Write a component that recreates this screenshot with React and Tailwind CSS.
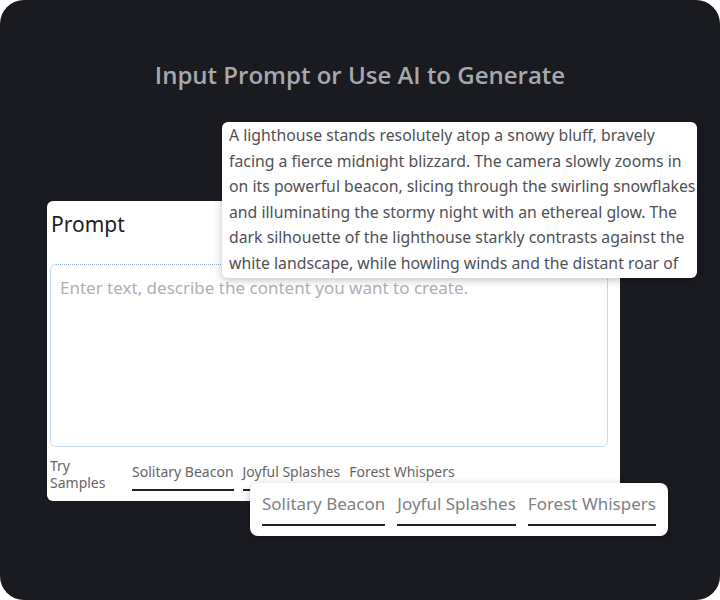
const popupLines = [
  "A lighthouse stands resolutely atop a snowy bluff, bravely",
  "facing a fierce midnight blizzard. The camera slowly zooms in",
  "on its powerful beacon, slicing through the swirling snowflakes",
  "and illuminating the stormy night with an ethereal glow. The",
  "dark silhouette of the lighthouse starkly contrasts against the",
  "white landscape, while howling winds and the distant roar of",
];

const samples = ["Solitary Beacon", "Joyful Splashes", "Forest Whispers"];

export default function App() {
  return (
    <div className="w-[720px] h-[600px] bg-white" style={{ fontFamily: "'Noto Sans', 'Open Sans', sans-serif" }}>
      <div className="relative w-full h-full rounded-[24px] bg-[#1a1b21] overflow-hidden">
        <div className="pt-[59px] text-center text-[24px] font-semibold text-[#a7a8ad] leading-[32px]" style={{ fontFamily: "'Open Sans', sans-serif" }}>
          Input Prompt or Use AI to Generate
        </div>

        <div className="ml-[47px] mt-[110px] w-[573px] h-[300px] bg-white rounded-[6px] pl-[3px] pr-[12px]">
          <div className="pt-[9px] pl-[1px] text-[21px] leading-[28px] text-[#222]">Prompt</div>
          <div className="mt-[26px] h-[183px] rounded-[6px] border border-dotted border-[#8cb2dc] px-[9px] pt-[11px]">
            <div className="text-[17px] leading-[24px] text-[#b0b0b5]">Enter text, describe the content you want to create.</div>
          </div>
          <div className="flex mt-[10px]">
            <div className="w-[82px] text-[14px] leading-[17px] text-[#666]">
              <div>Try</div>
              <div>Samples</div>
            </div>
            <div className="flex gap-[9px] pt-[5px]">
              {samples.map((s) => (
                <div key={s} className="text-[14px] leading-[20px] text-[#666] pb-[3px] border-b-[2px] border-[#222]">{s}</div>
              ))}
            </div>
          </div>
        </div>

        <div className="absolute left-[222px] top-[122px] w-[475px] h-[156px] bg-white rounded-[6px] shadow-[0_2px_8px_rgba(0,0,0,0.25)] overflow-hidden pl-[7px] pt-[1px]">
          {popupLines.map((l) => (
            <div key={l} className="whitespace-nowrap text-[15.8px] leading-[25.5px] text-[#505055]">{l}</div>
          ))}
        </div>

        <div className="absolute left-[250px] top-[483px] w-[418px] h-[53px] bg-white rounded-[8px] shadow-[0_2px_8px_rgba(0,0,0,0.25)] flex gap-[12px] pl-[12px] pt-[9px]">
          {samples.map((s) => (
            <div key={s} className="h-[34px] text-[17px] leading-[24px] text-[#808085] border-b-[2px] border-[#222]">{s}</div>
          ))}
        </div>
      </div>
    </div>
  );
}
